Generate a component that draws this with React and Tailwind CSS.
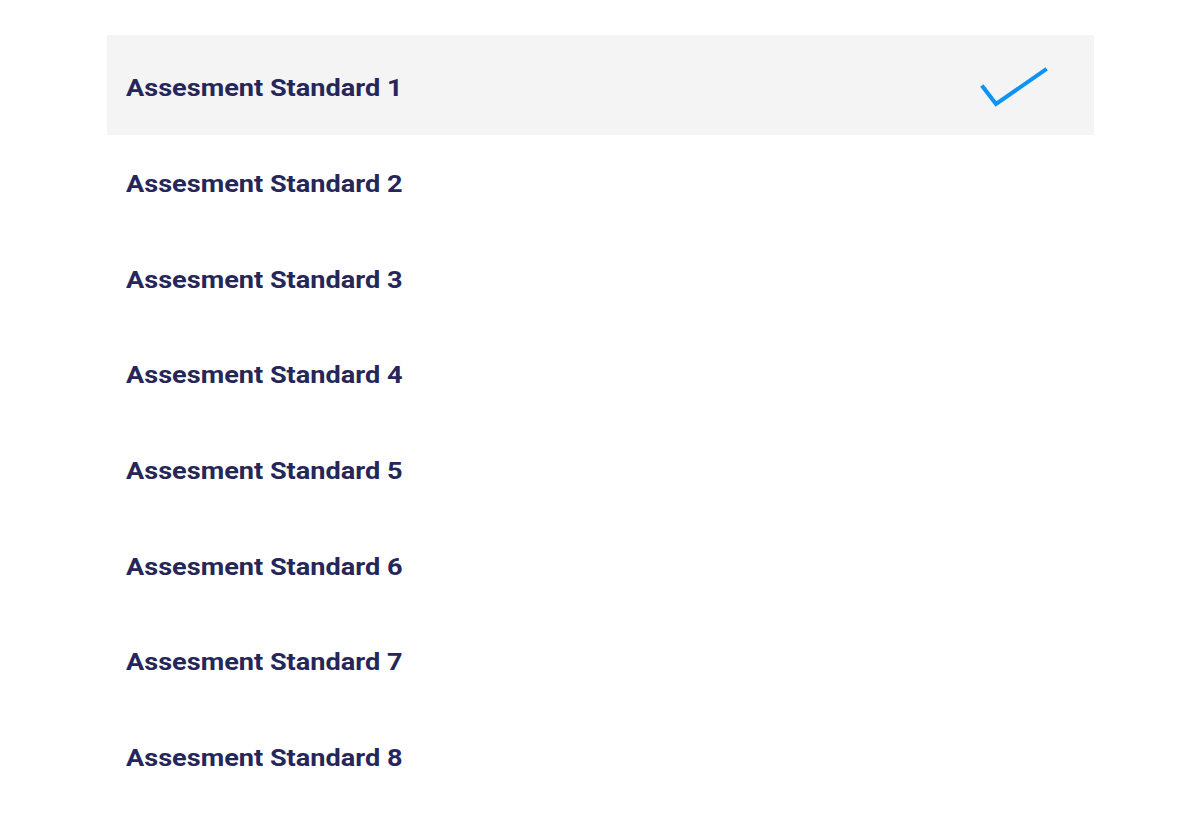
const standards = [1, 2, 3, 4, 5, 6, 7, 8].map((n) => `Assesment Standard ${n}`);

function Check() {
  return (
    <svg width="72" height="46" viewBox="0 0 72 46" fill="none" className="text-[#0a94f5]">
      <path d="M3 21 L16 38 L65 4" stroke="currentColor" strokeWidth="4" strokeLinecap="square" strokeLinejoin="miter" />
    </svg>
  );
}

export default function App() {
  const selected = 0;
  return (
    <div className="min-h-screen bg-white pt-[35px] font-['Roboto',sans-serif]">
      <ul className="ml-[107px] w-[987px]">
        {standards.map((label, i) => (
          <li
            key={label}
            className={
              i === selected
                ? 'flex h-[100px] items-center justify-between bg-[#f4f4f4] pl-[19px] pr-[42px] pt-[6px]'
                : 'flex h-[95.7px] items-center pl-[19px] pt-[2px]'
            }
          >
            <span className="origin-left scale-x-[1.13] text-[24px] font-bold text-[#262659]">
              {label}
            </span>
            {i === selected && (
              <span className="mt-[2px]">
                <Check />
              </span>
            )}
          </li>
        ))}
      </ul>
    </div>
  );
}
